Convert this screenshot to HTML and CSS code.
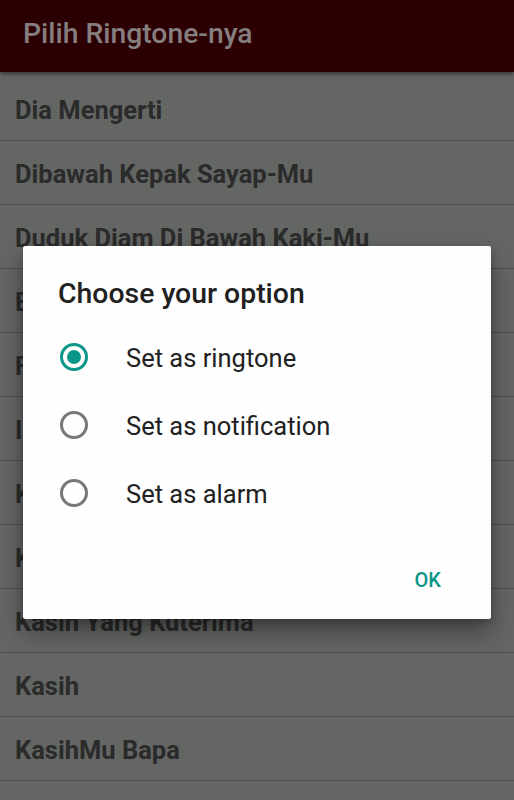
FILE: index.html
```html
<!DOCTYPE html>
<html>
<head>
<meta charset="utf-8">
<link rel="stylesheet" href="styles.css">
</head>
<body>
<div class="screen">
  <header class="appbar"><h1 class="appbar-title">Pilih Ringtone-nya</h1></header>
  <ul class="list">
    <li class="row">Dia Mengerti</li>
    <li class="row">Dibawah Kepak Sayap-Mu</li>
    <li class="row">Duduk Diam Di Bawah Kaki-Mu</li>
    <li class="row">Engkau Baik</li>
    <li class="row">Firman-Mu Pelita</li>
    <li class="row">Indah Rencana-Mu</li>
    <li class="row">Kasih Setia-Mu</li>
    <li class="row">Kasih Sejati</li>
    <li class="row">Kasih Yang Kuterima</li>
    <li class="row">Kasih</li>
    <li class="row">KasihMu Bapa</li>
    <li class="row"></li>
  </ul>

  <div class="dialog">
    <h2 class="dialog-title">Choose your option</h2>
    <div class="options">
      <div class="option">
        <svg class="radio" width="32" height="32" viewBox="0 0 32 32"><circle cx="16" cy="16" r="12.5" fill="none" stroke="#0a9688" stroke-width="3"/><circle cx="16" cy="16" r="7" fill="#0a9688"/></svg>
        <span class="option-label">Set as ringtone</span>
      </div>
      <div class="option">
        <svg class="radio" width="32" height="32" viewBox="0 0 32 32"><circle cx="16" cy="16" r="12.5" fill="none" stroke="#777877" stroke-width="3"/></svg>
        <span class="option-label">Set as notification</span>
      </div>
      <div class="option">
        <svg class="radio" width="32" height="32" viewBox="0 0 32 32"><circle cx="16" cy="16" r="12.5" fill="none" stroke="#777877" stroke-width="3"/></svg>
        <span class="option-label">Set as alarm</span>
      </div>
    </div>
    <div class="actions"><span class="btn">OK</span></div>
  </div>
</div>
</body>
</html>
```
FILE: styles.css
```css
* { box-sizing: border-box; }
html, body {
  margin: 0;
  padding: 0;
  background: #646664;
  font-family: Roboto, "Noto Sans", sans-serif;
}
.screen {
  position: relative;
  width: 514px;
  height: 800px;
  overflow: hidden;
  background: #646664;
}
.appbar {
  position: relative;
  z-index: 1;
  height: 72px;
  background: #2c0003;
  display: flex;
  align-items: center;
  padding-left: 23px;
  box-shadow: 0 2px 4px rgba(0,0,0,0.45);
}
.appbar-title {
  margin: 0;
  font-size: 28.3px;
  font-weight: 500;
  color: #857e7f;
  line-height: 32px;
  padding-bottom: 4px;
}
.list {
  list-style: none;
  margin: 0;
  padding: 5px 0 0 0;
}
.row {
  height: 64px;
  border-bottom: 1px solid #4e504e;
  display: flex;
  align-items: center;
  padding: 3px 0 0 15px;
  font-size: 25.5px;
  font-weight: 700;
  color: #2a2b2a;
}
.dialog {
  position: absolute;
  left: 23px;
  top: 246px;
  width: 468px;
  background: #fdfefd;
  border-radius: 2px;
  box-shadow: 0 14px 26px rgba(0,0,0,0.34), 0 4px 10px rgba(0,0,0,0.2);
  padding: 33px 0 27px 0;
}
.dialog-title {
  margin: 0 0 14px 35px;
  font-size: 28.4px;
  line-height: 30px;
  font-weight: 500;
  color: #212121;
}
.options {
  display: flex;
  flex-direction: column;
}
.option {
  height: 68px;
  display: flex;
  align-items: center;
  padding-left: 35px;
}
.radio {
  flex: none;
  margin-right: 36px;
}
.option-label {
  font-size: 25.5px;
  color: #212121;
  line-height: 30px;
  padding-top: 1px;
}
.actions {
  margin-top: 41px;
  display: flex;
  justify-content: flex-end;
  padding-right: 50px;
}
.btn {
  font-size: 20px;
  line-height: 24px;
  font-weight: 500;
  color: #0a9688;
}
```
